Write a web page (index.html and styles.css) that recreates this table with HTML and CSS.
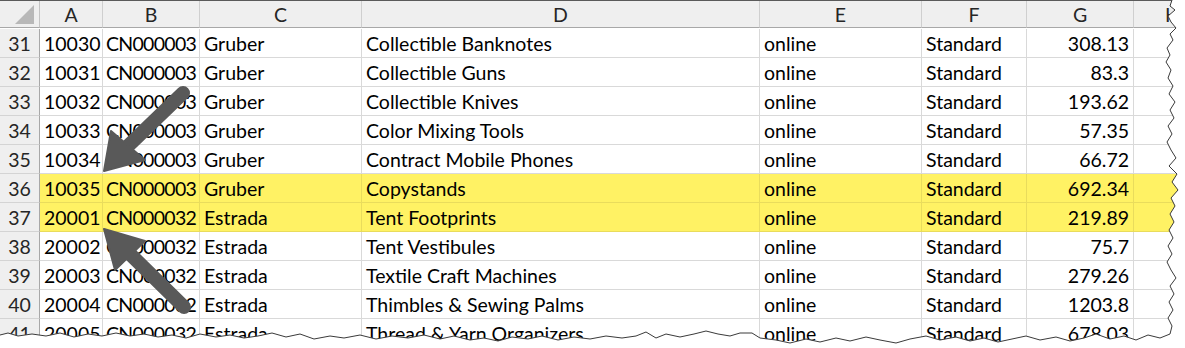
FILE: index.html
```html
<!DOCTYPE html>
<html>
<head>
<meta charset="utf-8">
<link rel="stylesheet" href="styles.css">
</head>
<body>
<div class="sheet">
  <div class="grid">
    <div class="hd corner"><span class="tri"></span></div>
    <div class="hd">A</div><div class="hd">B</div><div class="hd">C</div><div class="hd">D</div>
    <div class="hd">E</div><div class="hd">F</div><div class="hd">G</div><div class="hd">H</div>

    <div class="rn">31</div><div class="c">10030</div><div class="c id">CN000003</div><div class="c">Gruber</div><div class="c">Collectible Banknotes</div><div class="c">online</div><div class="c">Standard</div><div class="c num">308.13</div><div class="c"></div>
    <div class="rn">32</div><div class="c">10031</div><div class="c id">CN000003</div><div class="c">Gruber</div><div class="c">Collectible Guns</div><div class="c">online</div><div class="c">Standard</div><div class="c num">83.3</div><div class="c"></div>
    <div class="rn">33</div><div class="c">10032</div><div class="c id">CN000003</div><div class="c">Gruber</div><div class="c">Collectible Knives</div><div class="c">online</div><div class="c">Standard</div><div class="c num">193.62</div><div class="c"></div>
    <div class="rn">34</div><div class="c">10033</div><div class="c id">CN000003</div><div class="c">Gruber</div><div class="c">Color Mixing Tools</div><div class="c">online</div><div class="c">Standard</div><div class="c num">57.35</div><div class="c"></div>
    <div class="rn">35</div><div class="c">10034</div><div class="c id">CN000003</div><div class="c">Gruber</div><div class="c">Contract Mobile Phones</div><div class="c">online</div><div class="c">Standard</div><div class="c num">66.72</div><div class="c"></div>
    <div class="rn">36</div><div class="c hl">10035</div><div class="c id hl">CN000003</div><div class="c hl">Gruber</div><div class="c hl">Copystands</div><div class="c hl">online</div><div class="c hl">Standard</div><div class="c hl num">692.34</div><div class="c hl"></div>
    <div class="rn">37</div><div class="c hl">20001</div><div class="c id hl">CN000032</div><div class="c hl">Estrada</div><div class="c hl">Tent Footprints</div><div class="c hl">online</div><div class="c hl">Standard</div><div class="c hl num">219.89</div><div class="c hl"></div>
    <div class="rn">38</div><div class="c">20002</div><div class="c id">CN000032</div><div class="c">Estrada</div><div class="c">Tent Vestibules</div><div class="c">online</div><div class="c">Standard</div><div class="c num">75.7</div><div class="c"></div>
    <div class="rn">39</div><div class="c">20003</div><div class="c id">CN000032</div><div class="c">Estrada</div><div class="c">Textile Craft Machines</div><div class="c">online</div><div class="c">Standard</div><div class="c num">279.26</div><div class="c"></div>
    <div class="rn">40</div><div class="c">20004</div><div class="c id">CN000032</div><div class="c">Estrada</div><div class="c">Thimbles &amp; Sewing Palms</div><div class="c">online</div><div class="c">Standard</div><div class="c num">1203.8</div><div class="c"></div>
    <div class="rn">41</div><div class="c">20005</div><div class="c id">CN000032</div><div class="c">Estrada</div><div class="c">Thread &amp; Yarn Organizers</div><div class="c">online</div><div class="c">Standard</div><div class="c num">678.03</div><div class="c"></div>
  </div>

  <svg class="overlay" width="1185" height="348" viewBox="0 0 1185 348">
    <g class="arrow">
      <line x1="183" y1="93" x2="128" y2="146" />
      <polygon points="104,171 111,131 145,160" />
      <line x1="184" y1="307" x2="130" y2="254" />
      <polygon points="104,229 145,241 115,270" />
    </g>
    <path class="tear-fill" fill-rule="evenodd" d="M-5,-5 H1190 V353 H-5 Z M1172,0 L1170,6 1175,10 1168,16 1171,22 1176,28 1170,34 1173,40 1167,48 1170,55 1166,62 1171,70 1168,78 1173,86 1169,94 1175,102 1170,110 1174,118 1168,126 1172,134 1167,142 1171,150 1176,158 1169,166 1177,174 1172,182 1178,190 1171,198 1175,206 1170,214 1174,222 1169,230 1173,238 1168,246 1172,254 1167,262 1171,270 1176,278 1170,286 1174,294 1169,302 1173,310 1168,318 1172,326 1170,334 1160,338 1148,335 1136,340 1124,336 1110,339 1096,334 1084,338 1070,341 1056,337 1040,340 1026,336 1012,339 998,342 984,338 970,341 956,337 940,340 926,336 910,339 896,343 880,340 866,337 850,341 836,338 820,342 806,339 790,343 776,340 760,338 752,333 740,333 730,336 718,334 706,331 694,334 680,337 666,334 656,338 646,332 636,336 622,338 606,336 590,339 574,337 558,340 542,336 528,339 512,337 498,341 484,338 470,340 454,336 440,339 424,335 408,338 392,336 376,339 360,335 344,338 330,336 314,339 300,334 286,337 272,333 258,336 244,338 230,335 216,337 200,334 186,338 172,335 158,337 144,334 130,336 116,333 102,336 88,334 74,337 60,333 46,336 32,334 18,336 8,333 0,335 L0,0 Z" />
    <path class="tear-line" d="M1172,0 L1170,6 1175,10 1168,16 1171,22 1176,28 1170,34 1173,40 1167,48 1170,55 1166,62 1171,70 1168,78 1173,86 1169,94 1175,102 1170,110 1174,118 1168,126 1172,134 1167,142 1171,150 1176,158 1169,166 1177,174 1172,182 1178,190 1171,198 1175,206 1170,214 1174,222 1169,230 1173,238 1168,246 1172,254 1167,262 1171,270 1176,278 1170,286 1174,294 1169,302 1173,310 1168,318 1172,326 1170,334 1160,338 1148,335 1136,340 1124,336 1110,339 1096,334 1084,338 1070,341 1056,337 1040,340 1026,336 1012,339 998,342 984,338 970,341 956,337 940,340 926,336 910,339 896,343 880,340 866,337 850,341 836,338 820,342 806,339 790,343 776,340 760,338 752,333 740,333 730,336 718,334 706,331 694,334 680,337 666,334 656,338 646,332 636,336 622,338 606,336 590,339 574,337 558,340 542,336 528,339 512,337 498,341 484,338 470,340 454,336 440,339 424,335 408,338 392,336 376,339 360,335 344,338 330,336 314,339 300,334 286,337 272,333 258,336 244,338 230,335 216,337 200,334 186,338 172,335 158,337 144,334 130,336 116,333 102,336 88,334 74,337 60,333 46,336 32,334 18,336 8,333 0,335" />
  </svg>
</div>
</body>
</html>
```

FILE: styles.css
```css
html, body {
  margin: 0;
  padding: 0;
  background: #ffffff;
}

.sheet {
  position: relative;
  width: 1185px;
  height: 348px;
  overflow: hidden;
  font-family: Lato, "Liberation Sans", sans-serif;
  font-size: 19.5px;
  color: #000;
}

.grid {
  display: grid;
  grid-template-columns: 40px 63px 97px 162px 398px 162px 105px 107px 78px;
  grid-template-rows: 28px repeat(11, 29px);
  border-top: 1px solid #5a5a5a;
}

.hd {
  background: #efefef;
  border-right: 1px solid #cfcfcf;
  border-bottom: 1px solid #a8a8a8;
  box-sizing: border-box;
  display: flex;
  align-items: center;
  justify-content: center;
  color: #262626;
  height: 27px;
}

.corner {
  position: relative;
  border-right: 1px solid #c4c4c4;
}

.tri {
  position: absolute;
  right: 5px;
  bottom: 3px;
  width: 0;
  height: 0;
  border-left: 19px solid transparent;
  border-bottom: 19px solid #b8b8b8;
}

.rn {
  background: #efefef;
  border-right: 1px solid #a8a8a8;
  border-bottom: 1px solid #d4d4d4;
  box-sizing: border-box;
  display: flex;
  align-items: center;
  justify-content: center;
  color: #262626;
}

.c {
  border-right: 1px solid #d9d9d9;
  border-bottom: 1px solid #d9d9d9;
  box-sizing: border-box;
  display: flex;
  align-items: center;
  padding: 0 4px;
  white-space: nowrap;
  overflow: hidden;
}

.id {
  letter-spacing: -0.7px;
  padding-left: 3px;
}

.num {
  justify-content: flex-end;
}

.hl {
  background: #fff264;
  border-color: #e9dc5c;
}

.overlay {
  position: absolute;
  left: 0;
  top: 0;
}

.arrow line {
  stroke: #595959;
  stroke-width: 14;
  stroke-linecap: round;
}

.arrow polygon {
  fill: #595959;
  stroke: #595959;
  stroke-width: 2;
  stroke-linejoin: round;
}

.tear-fill {
  fill: #ffffff;
}

.tear-line {
  fill: none;
  stroke: #3a3a3a;
  stroke-width: 1;
}
```
